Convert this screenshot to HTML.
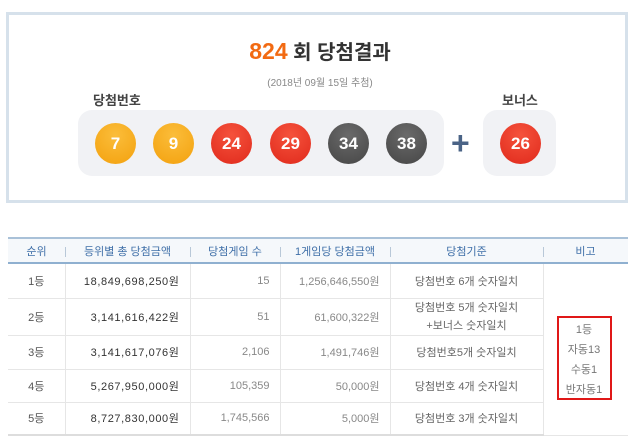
<!DOCTYPE html>
<html><head><meta charset="utf-8"><style>
*{margin:0;padding:0;box-sizing:border-box}
body{width:640px;height:443px;background:#fff;font-family:"Liberation Sans","Noto Sans CJK KR",sans-serif;position:relative;overflow:hidden}
.box{position:absolute;left:6px;top:12px;width:622px;height:191px;border:3px solid #d6e1eb}
.abs{position:absolute}
.title{left:0;width:640px;top:36px;text-align:center;font-size:20px;font-weight:bold;color:#333}
.title b{color:#f26a12;font-size:23px}
.date{left:0;width:640px;top:74px;text-align:center;font-size:10px;color:#888}
.lbl{font-size:13px;font-weight:bold;color:#444}
.bg{background:#f1f2f5;border-radius:14px}
.ball{position:absolute;width:41px;height:41px;border-radius:50%;top:123px;color:#fff;font-weight:bold;font-size:17px;text-align:center;line-height:41px}
.y{background:radial-gradient(circle at 50% 30%,#fbbd3a,#f3a10e)}
.r{background:radial-gradient(circle at 50% 30%,#f5523c,#e02a1c)}
.g{background:radial-gradient(circle at 50% 30%,#6a6a6a,#464646)}
table{position:absolute;left:8px;top:237px;width:620px;border-collapse:collapse;font-size:11px;color:#666}
th{height:25px;background:#f5f8fb;color:#3f6fa8;font-weight:normal;border-top:2px solid #a9c1d8;border-bottom:2px solid #8fb0d0;font-size:11px;position:relative}
th+th:before{content:"";position:absolute;left:0;top:8px;height:10px;border-left:1px solid #b8c8d8}
td{border-bottom:1px solid #e6e6e6;border-right:1px solid #e6e6e6;text-align:right;padding-right:10px}
td:first-child{text-align:center;padding:0;color:#555}
td.c{text-align:center;padding:0}
td.m{color:#333;letter-spacing:0.6px}
td.n{color:#888}
</style></head><body>
<div class="box"></div>
<div class="abs title"><b>824</b> 회 당첨결과</div>
<div class="abs date">(2018년 09월 15일 추첨)</div>
<div class="abs lbl" style="left:93px;top:90px">당첨번호</div>
<div class="abs lbl" style="left:502px;top:90px">보너스</div>
<div class="abs bg" style="left:78px;top:110px;width:366px;height:66px"></div>
<div class="abs bg" style="left:483px;top:110px;width:73px;height:66px"></div>
<div class="ball y" style="left:95px">7</div>
<div class="ball y" style="left:153px">9</div>
<div class="ball r" style="left:211px">24</div>
<div class="ball r" style="left:270px">29</div>
<div class="ball g" style="left:328px">34</div>
<div class="ball g" style="left:386px">38</div>
<div class="abs" style="left:451px;top:129px;font-size:32px;font-weight:bold;color:#4a6386;line-height:28px">+</div>
<div class="ball r" style="left:500px">26</div>
<table>
<tr><th style="width:57px">순위</th><th style="width:125px">등위별 총 당첨금액</th><th style="width:90px">당첨게임 수</th><th style="width:110px">1게임당 당첨금액</th><th style="width:153px">당첨기준</th><th>비고</th></tr>
<tr><td style="height:35px">1등</td><td class="m">18,849,698,250원</td><td class="n">15</td><td class="n">1,256,646,550원</td><td class="c">당첨번호 6개 숫자일치</td><td rowspan="5" class="c" style="border-right:none;position:relative"><div style="position:absolute;left:13px;top:52px;width:55px;height:84px;border:2px solid #e01818;line-height:20px;padding-top:2px;color:#777">1등<br>자동13<br>수동1<br>반자동1</div></td></tr>
<tr><td style="height:36px">2등</td><td class="m">3,141,616,422원</td><td class="n">51</td><td class="n">61,600,322원</td><td class="c" style="line-height:18px">당첨번호 5개 숫자일치<br>+보너스 숫자일치</td></tr>
<tr><td style="height:34px">3등</td><td class="m">3,141,617,076원</td><td class="n">2,106</td><td class="n">1,491,746원</td><td class="c">당첨번호5개 숫자일치</td></tr>
<tr><td style="height:33px">4등</td><td class="m">5,267,950,000원</td><td class="n">105,359</td><td class="n">50,000원</td><td class="c">당첨번호 4개 숫자일치</td></tr>
<tr><td style="height:33px;border-bottom:2px solid #ddd">5등</td><td class="m" style="border-bottom:2px solid #ddd">8,727,830,000원</td><td class="n" style="border-bottom:2px solid #ddd">1,745,566</td><td class="n" style="border-bottom:2px solid #ddd">5,000원</td><td class="c" style="border-bottom:2px solid #ddd">당첨번호 3개 숫자일치</td></tr>
</table>
</body></html>
